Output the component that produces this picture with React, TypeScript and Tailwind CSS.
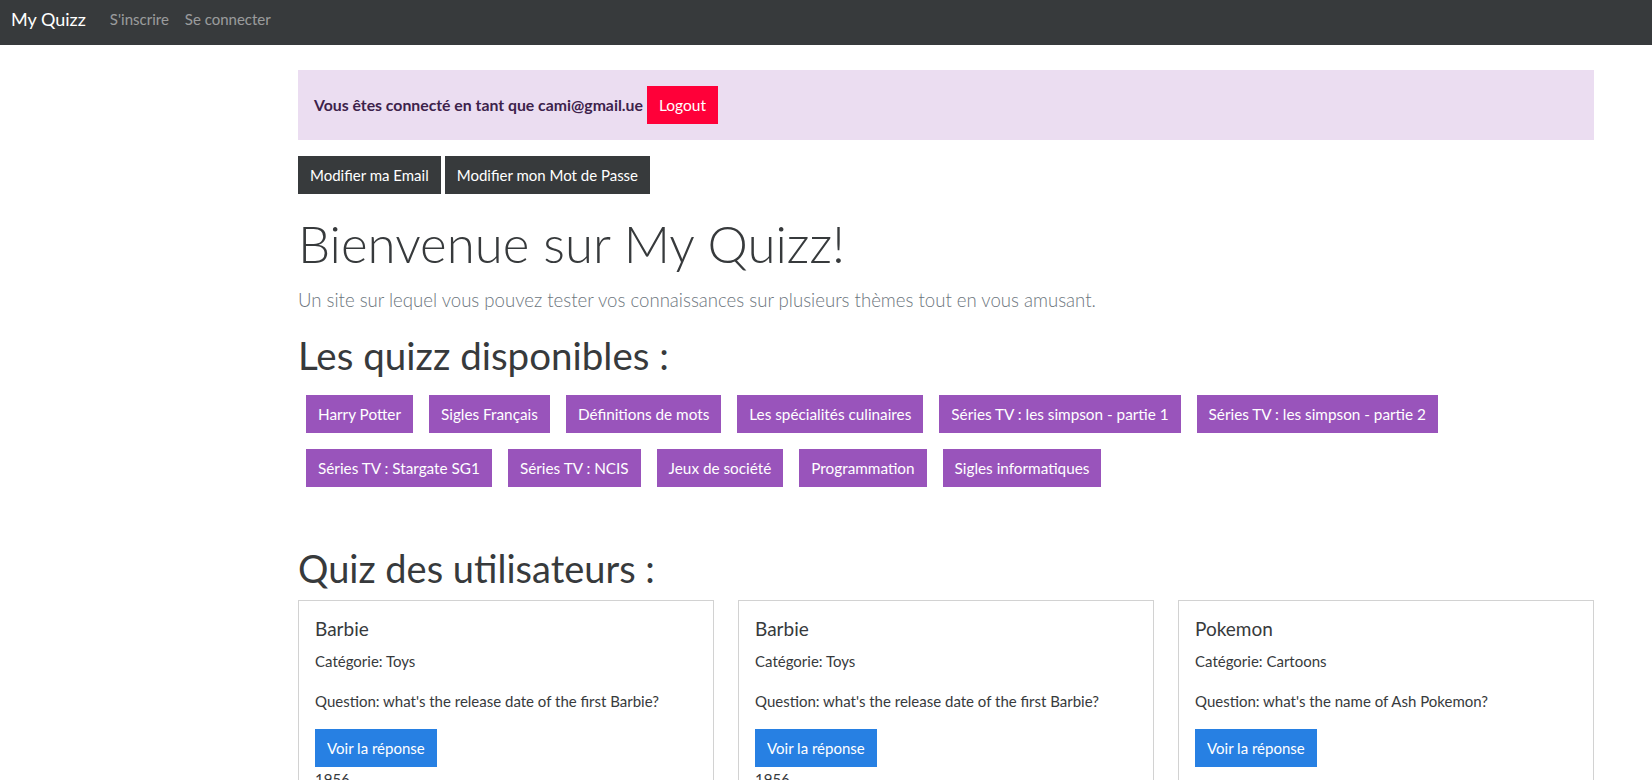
import React, { useState } from 'react';

const quizzList: string[] = [
  'Harry Potter',
  'Sigles Français',
  'Définitions de mots',
  'Les spécialités culinaires',
  'Séries TV : les simpson - partie 1',
  'Séries TV : les simpson - partie 2',
  'Séries TV : Stargate SG1',
  'Séries TV : NCIS',
  'Jeux de société',
  'Programmation',
  'Sigles informatiques',
];

interface UserQuiz {
  id: number;
  title: string;
  category: string;
  question: string;
  answer: string;
}

const userQuizzes: UserQuiz[] = [
  {
    id: 1,
    title: 'Barbie',
    category: 'Toys',
    question: "what's the release date of the first Barbie?",
    answer: '1956',
  },
  {
    id: 2,
    title: 'Barbie',
    category: 'Toys',
    question: "what's the release date of the first Barbie?",
    answer: '1956',
  },
  {
    id: 3,
    title: 'Pokemon',
    category: 'Cartoons',
    question: "what's the name of Ash Pokemon?",
    answer: 'Pikachu',
  },
];

const Navbar = () => (
  <nav className="h-[45px] bg-[#373a3c] pl-[11px]">
    <div className="flex items-center h-[38px]">
      <a href="#" className="text-white text-[18px] leading-[30px] mr-4">
        My Quizz
      </a>
      <a href="#" className="text-white/50 text-[15px] leading-6 px-2">
        S'inscrire
      </a>
      <a href="#" className="text-white/50 text-[15px] leading-6 px-2">
        Se connecter
      </a>
    </div>
  </nav>
);

const QuizCard = ({ quiz, open }: { quiz: UserQuiz; open: boolean }) => {
  const [showAnswer, setShowAnswer] = useState(open);

  return (
    <div className="border border-[#d2d2d2] p-4 min-h-[200px]">
      <h5 className="text-[19px] leading-6 mb-2">{quiz.title}</h5>
      <p className="mb-4">Catégorie: {quiz.category}</p>
      <p className="mb-4">Question: {quiz.question}</p>
      <button
        onClick={() => setShowAnswer(!showAnswer)}
        className="bg-[#2780e3] text-white px-3 py-[7px] leading-6"
      >
        Voir la réponse
      </button>
      {showAnswer && <div>{quiz.answer}</div>}
    </div>
  );
};

export default function App() {
  return (
    <div
      className="min-h-screen bg-white text-[#373a3c] text-[15px] leading-6"
      style={{ fontFamily: 'Lato, "Liberation Sans", sans-serif' }}
    >
      <Navbar />

      <main className="pl-[298px] pr-[58px] pt-[25px] pb-10">
        <div className="bg-[#ebddf1] text-[#3d224b] p-4 mb-4 flex items-center gap-1">
          <strong className="font-bold text-[15.8px]">
            Vous êtes connecté en tant que cami@gmail.ue
          </strong>
          <button className="bg-[#ff0039] text-white text-[15.5px] px-3 py-[7px] leading-6">
            Logout
          </button>
        </div>

        <div className="flex gap-1">
          <button className="bg-[#373a3c] text-white px-3 py-[7px] leading-6">
            Modifier ma Email
          </button>
          <button className="bg-[#373a3c] text-white px-3 py-[7px] leading-6">
            Modifier mon Mot de Passe
          </button>
        </div>

        <h1 className="mt-4 mb-2 text-[51px] leading-[67px] font-light">
          Bienvenue sur My Quizz!
        </h1>
        <p className="mb-4 text-[18.6px] leading-[30px] font-light text-[#6c757d]">
          Un site sur lequel vous pouvez tester vos connaissances sur plusieurs
          thèmes tout en vous amusant.
        </p>

        <h1 className="mb-2 text-[38.5px] leading-[48px]">Les quizz disponibles :</h1>
        <div className="flex flex-wrap">
          {quizzList.map((name) => (
            <a
              key={name}
              href="#"
              className="m-2 bg-[#9954bb] text-white text-[15.3px] px-3 py-[7px] leading-6"
            >
              {name}
            </a>
          ))}
        </div>

        <h1 className="mt-[49px] mb-2 text-[38px] leading-[48px]">
          Quiz des utilisateurs :
        </h1>
        <div className="grid grid-cols-3 gap-6">
          {userQuizzes.map((quiz) => (
            <QuizCard key={quiz.id} quiz={quiz} open={quiz.id !== 3} />
          ))}
        </div>
      </main>
    </div>
  );
}
